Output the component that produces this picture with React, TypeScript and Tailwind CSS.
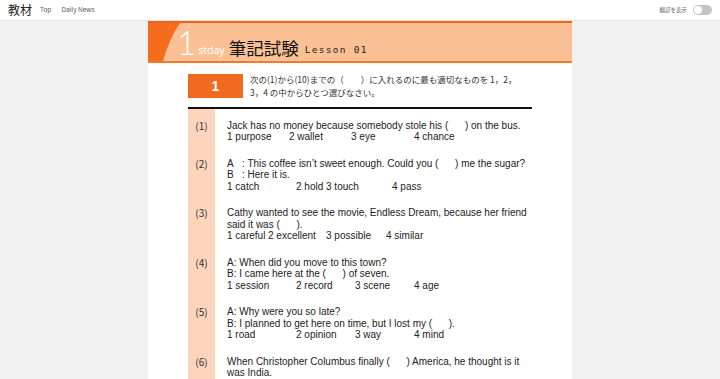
import React from 'react'

type Question = {
  no: string
  lines: string[]
  choices: [string, number][]
}

const questions: Question[] = [
  {
    no: '(1)',
    lines: ['Jack has no money because somebody stole his (\u00a0\u00a0\u00a0\u00a0\u00a0\u00a0) on the bus.'],
    choices: [['1 purpose', 62], ['2 wallet', 62], ['3 eye', 63], ['4 chance', 0]],
  },
  {
    no: '(2)',
    lines: [
      'A\u00a0\u00a0\u00a0: This coffee isn\u2019t sweet enough. Could you (\u00a0\u00a0\u00a0\u00a0\u00a0\u00a0) me the sugar?',
      'B\u00a0\u00a0\u00a0: Here it is.',
    ],
    choices: [['1 catch', 69], ['2 hold 3 touch', 96], ['4 pass', 0]],
  },
  {
    no: '(3)',
    lines: [
      'Cathy wanted to see the movie, Endless Dream, because her friend',
      'said it was (\u00a0\u00a0\u00a0\u00a0\u00a0\u00a0).',
    ],
    choices: [['1 careful', 41], ['2 excellent', 58], ['3 possible', 60], ['4 similar', 0]],
  },
  {
    no: '(4)',
    lines: ['A: When did you move to this town?', 'B: I came here at the (\u00a0\u00a0\u00a0\u00a0\u00a0\u00a0) of seven.'],
    choices: [['1 session', 69], ['2 record', 59], ['3 scene', 59], ['4 age', 0]],
  },
  {
    no: '(5)',
    lines: [
      'A: Why were you so late?',
      'B: I planned to get here on time, but I lost my (\u00a0\u00a0\u00a0\u00a0\u00a0\u00a0).',
    ],
    choices: [['1 road', 69], ['2 opinion', 59], ['3 way', 59], ['4 mind', 0]],
  },
  {
    no: '(6)',
    lines: [
      'When Christopher Columbus finally (\u00a0\u00a0\u00a0\u00a0\u00a0\u00a0) America, he thought is it',
      'was India.',
    ],
    choices: [],
  },
]

const jp = "font-['Noto_Sans_CJK_JP',sans-serif]"

function NavBar() {
  return (
    <div className={`flex h-[21px] items-center justify-between border-b border-[#e4e4e4] bg-white px-[8px] ${jp}`}>
      <div className="flex items-center">
        <span className="text-[12px] leading-none text-[#222]">教材</span>
        <span className="ml-[8px] text-[6.5px] text-[#555]">Top</span>
        <span className="ml-[10px] text-[6.5px] text-[#555]">Daily News</span>
      </div>
      <div className="flex items-center gap-[6px]">
        <span className="text-[5.5px] text-[#666]">翻訳を表示</span>
        <div className="flex h-[10px] w-[19px] items-center rounded-full bg-[#c4c4c4] px-[1px]">
          <div className="h-[8px] w-[8px] rounded-full bg-white" />
        </div>
      </div>
    </div>
  )
}

function Header() {
  return (
    <div className="relative h-[42px] border-y-2 border-t-[#f0641a] border-b-[#f07a30] bg-[#fbc194]">
      <svg className="absolute left-0 top-0" width="34" height="38" viewBox="0 0 34 38">
        <path d="M0 0 H32 Q22 14 15 38 H0 Z" fill="#f46d1e" />
      </svg>
      <div className="relative flex h-full items-end pb-[2px] pl-[29px]">
        <span className="font-['Lato',sans-serif] text-[33px] font-light leading-[33px] text-white">1</span>
        <span className="mb-[4px] ml-[2px] font-['Noto_Sans',sans-serif] text-[10.5px] leading-none text-white">stday</span>
        <span className={`mb-[3px] ml-[4px] text-[17.5px] leading-none text-[#111] ${jp}`}>筆記試験</span>
        <span className="mb-[5px] ml-[6px] font-['DejaVu_Sans_Mono',monospace] text-[9.5px] leading-none tracking-[1.3px] text-[#222]">
          Lesson 01
        </span>
      </div>
    </div>
  )
}

function QuestionRow({ q, first }: { q: Question; first: boolean }) {
  const pad = first ? 'pt-[10.5px] pb-[7.5px]' : 'py-[7.5px]'
  return (
    <div className="flex">
      <div className={`w-[27px] shrink-0 bg-[#fcd5bc] text-center text-[10px] leading-[11.5px] text-[#333] ${jp} ${pad}`}>
        {q.no}
      </div>
      <div className={`pl-[12px] font-['Liberation_Sans',sans-serif] text-[10px] leading-[11.5px] text-[#222] ${pad}`}>
        {q.lines.map((l, i) => (
          <div key={i} className="whitespace-nowrap">
            {l}
          </div>
        ))}
        {q.choices.length > 0 && (
          <div className="flex whitespace-nowrap">
            {q.choices.map(([c, w], i) => (
              <span key={i} style={w ? { width: w } : undefined} className="shrink-0">
                {c}
              </span>
            ))}
          </div>
        )}
      </div>
    </div>
  )
}

export default function App() {
  return (
    <div className="min-h-screen bg-[#f1f1f1]">
      <NavBar />
      <div className="mx-auto min-h-[358px] w-[424px] bg-white">
        <Header />
        <div className="px-[40px] pt-[11px]">
          <div className="flex">
            <div className="flex h-[24px] w-[55px] shrink-0 items-center justify-center bg-[#f26a1f] font-['Liberation_Sans',sans-serif] text-[14px] font-bold text-white">
              1
            </div>
            <p className={`-mt-[1px] ml-[7px] text-[8.5px] leading-[12.5px] text-[#333] ${jp}`}>
              次の(1)から(10)までの（　　）に入れるのに最も適切なものを 1，2，
              <br />
              3，4 の中からひとつ選びなさい。
            </p>
          </div>
          <div className="mt-[9px] h-[2px] bg-[#111]" />
          <div className="flex flex-col">
            {questions.map((q, i) => (
              <QuestionRow key={q.no} q={q} first={i === 0} />
            ))}
          </div>
        </div>
      </div>
    </div>
  )
}
